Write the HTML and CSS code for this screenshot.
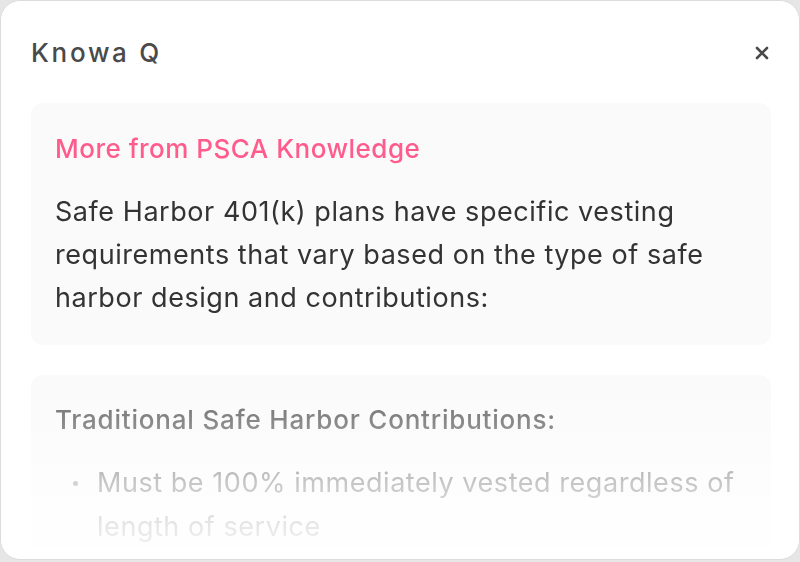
FILE: index.html
```html
<!DOCTYPE html>
<html>
<head>
<meta charset="utf-8">
<link rel="stylesheet" href="styles.css">
</head>
<body>
<div class="panel">
  <div class="header">
    <h1 class="title">Knowa Q</h1>
    <button class="close" aria-label="Close">
      <svg width="14" height="14" viewBox="0 0 14 14"><path d="M2 2L12 12M12 2L2 12" stroke="#4a4a4a" stroke-width="2.6" stroke-linecap="round"/></svg>
    </button>
  </div>
  <div class="content">
    <section class="block">
      <h2 class="accent">More from PSCA Knowledge</h2>
      <p class="text">Safe Harbor 401(k) plans have specific vesting requirements that vary based on the type of safe harbor design and contributions:</p>
    </section>
    <section class="block">
      <h3 class="sub">Traditional Safe Harbor Contributions:</h3>
      <ul class="list">
        <li>Must be 100% immediately vested regardless of length of service</li>
      </ul>
    </section>
  </div>
</div>
</body>
</html>
```
FILE: styles.css
```css
html, body {
  margin: 0;
  padding: 0;
  background: #e6e6e6;
}
body {
  width: 800px;
  height: 562px;
  font-family: "Inter", "Liberation Sans", sans-serif;
}
.panel {
  box-sizing: border-box;
  width: 800px;
  height: 560px;
  background: #fff;
  border: 1px solid #dcdcdc;
  border-radius: 20px;
  padding: 0 28px 0 30px;
  overflow: hidden;
  display: flex;
  flex-direction: column;
}
.header {
  display: flex;
  align-items: center;
  justify-content: space-between;
  height: 102px;
  flex: none;
}
.title {
  margin: 0;
  font-size: 26px;
  font-weight: 500;
  color: #4a4a4a;
  letter-spacing: 2.7px;
}
.close {
  border: 0;
  background: none;
  padding: 0;
  width: 24px;
  height: 24px;
  display: flex;
  align-items: center;
  justify-content: center;
  margin-right: -3px;
  margin-top: 2px;
}
.content {
  display: flex;
  flex-direction: column;
  gap: 30px;
  -webkit-mask-image: linear-gradient(to bottom, #000 0px, #000 280px, rgba(0,0,0,0.8) 315px, rgba(0,0,0,0.38) 378px, rgba(0,0,0,0.16) 422px, rgba(0,0,0,0.05) 460px);
  mask-image: linear-gradient(to bottom, #000 0px, #000 280px, rgba(0,0,0,0.8) 315px, rgba(0,0,0,0.38) 378px, rgba(0,0,0,0.16) 422px, rgba(0,0,0,0.05) 460px);
}
.block {
  background: #fafafa;
  border-radius: 12px;
  padding: 29px 24px 26px;
}
.accent {
  margin: 0 0 24px;
  font-size: 26px;
  font-weight: 500;
  color: #ff5b8c;
  line-height: 34px;
  letter-spacing: 0.5px;
}
.text {
  margin: 0;
  font-size: 27px;
  line-height: 43px;
  color: #333;
  letter-spacing: 0.55px;
}
.block + .block {
  padding-top: 28px;
}
.sub {
  margin: 0 0 24px;
  font-size: 26px;
  font-weight: 500;
  line-height: 34px;
  color: #666;
  letter-spacing: 0.8px;
}
.list {
  margin: 0;
  padding: 0;
  list-style: none;
  font-size: 27px;
  line-height: 44px;
  color: #666;
  letter-spacing: 0.55px;
}
.list li {
  position: relative;
  padding-left: 42px;
}
.list li::before {
  content: "";
  position: absolute;
  left: 18px;
  top: 20px;
  width: 5px;
  height: 5px;
  border-radius: 50%;
  background: #888;
}
```
